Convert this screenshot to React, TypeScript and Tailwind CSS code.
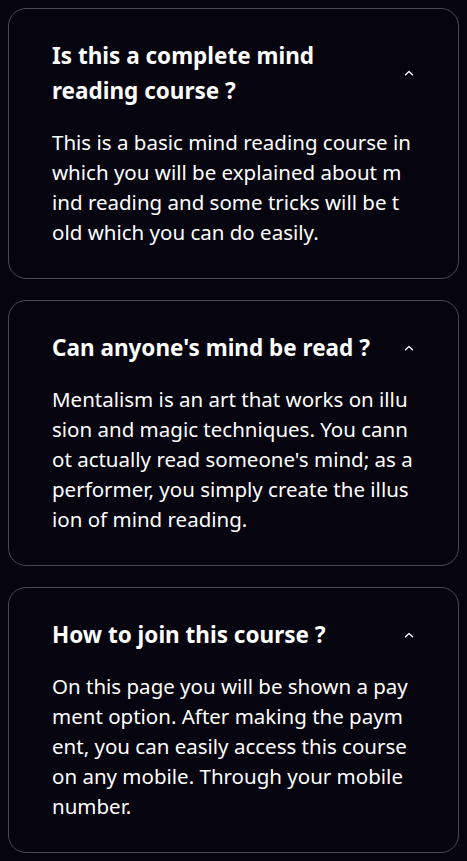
import React from 'react';

// answer text kept in the same line breaks as the original layout
const faqs = [
  {
    q: 'Is this a complete mind reading course ?',
    a: [
      'This is a basic mind reading course in',
      'which you will be explained about m',
      'ind reading and some tricks will be t',
      'old which you can do easily.',
    ],
  },
  {
    q: "Can anyone's mind be read ?",
    a: [
      'Mentalism is an art that works on illu',
      'sion and magic techniques. You cann',
      "ot actually read someone's mind; as a",
      'performer, you simply create the illus',
      'ion of mind reading.',
    ],
  },
  {
    q: 'How to join this course ?',
    a: [
      'On this page you will be shown a pay',
      'ment option. After making the paym',
      'ent, you can easily access this course',
      'on any mobile. Through your mobile',
      'number.',
    ],
  },
];

function Caret() {
  return (
    <svg width="10" height="6" viewBox="0 0 10 6" fill="none" className="shrink-0">
      <path d="M1.5 4.8 L5 1.5 L8.5 4.8" stroke="white" strokeWidth="1.3" strokeLinecap="round" strokeLinejoin="round" />
    </svg>
  );
}

function FaqCard({ q, a }: { q: string; a: string[] }) {
  return (
    <div className="rounded-[18px] border border-[#4a4a4e] bg-[#06050f] pl-[43px] pr-[44px] pt-[29px] pb-[31px]">
      <div className="flex items-center justify-between gap-6">
        <h3 className="text-[22.5px] font-bold leading-[35px] text-white">{q}</h3>
        <Caret />
      </div>
      <p className="mt-[19px] text-[20.5px] leading-[30px] text-white">
        {a.map((line) => (
          <span key={line} className="block whitespace-nowrap">
            {line}
          </span>
        ))}
      </p>
    </div>
  );
}

export default function App() {
  return (
    <div
      className="min-h-screen bg-[#06050f] px-[8px] py-[8px] flex flex-col gap-[21px]"
      style={{ fontFamily: '"Noto Sans", "Liberation Sans", sans-serif' }}
    >
      {faqs.map((f) => (
        <FaqCard key={f.q} q={f.q} a={f.a} />
      ))}
    </div>
  );
}
